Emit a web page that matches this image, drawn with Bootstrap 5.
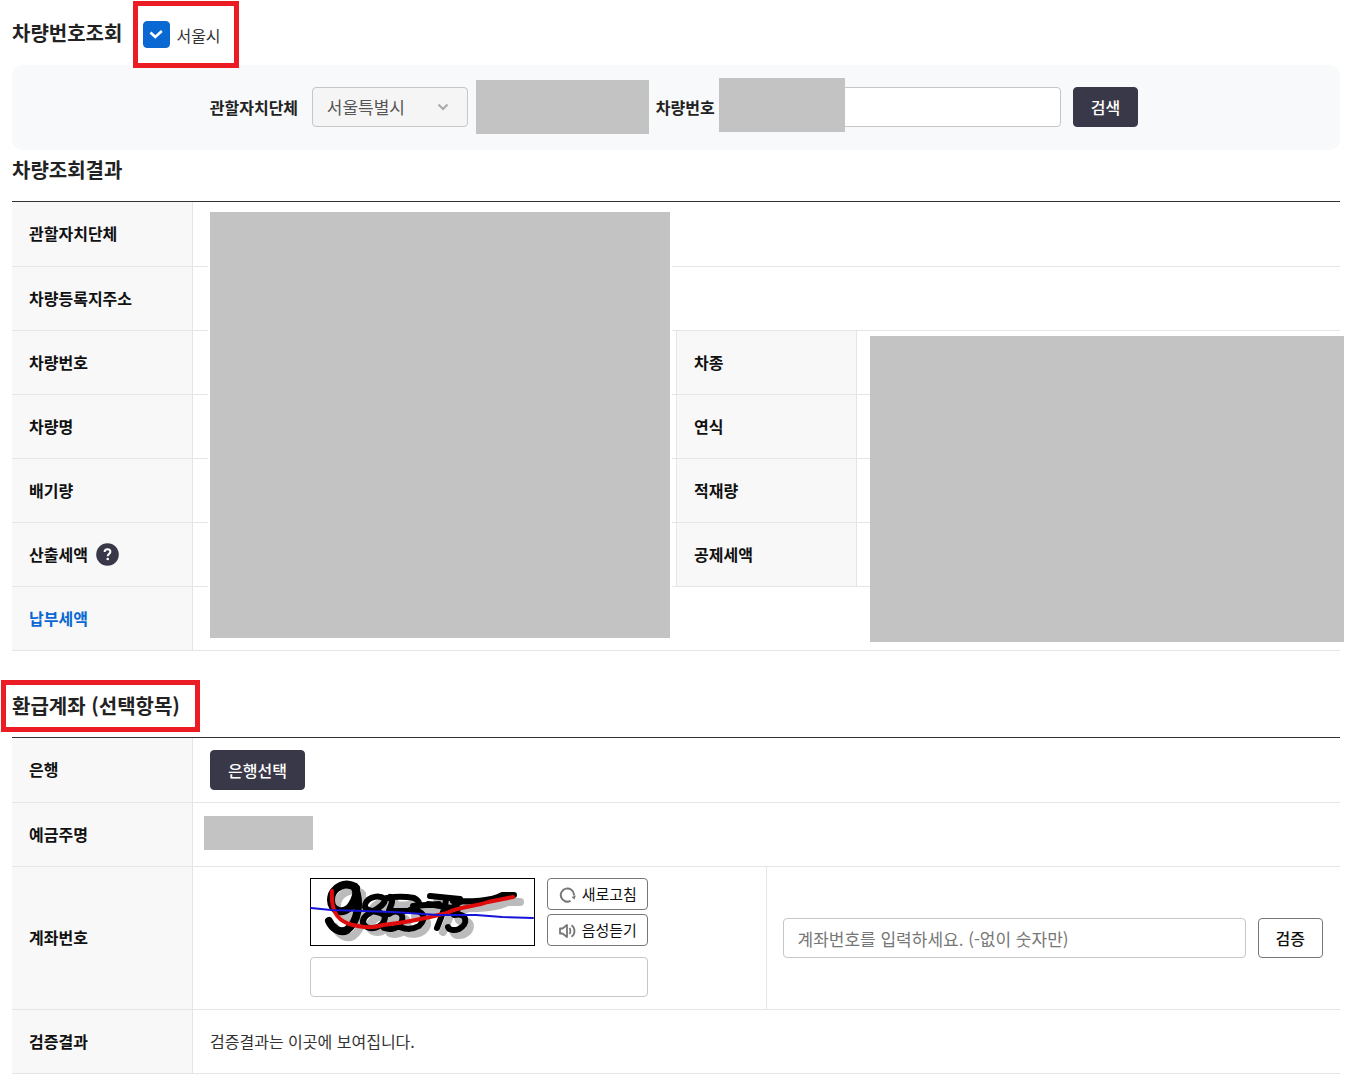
<!DOCTYPE html>
<html lang="ko">
<head>
<meta charset="utf-8">
<meta name="viewport" content="width=device-width, initial-scale=1">
<title>차량번호조회</title>
<link href="https://cdn.jsdelivr.net/npm/bootstrap@5.3.0/dist/css/bootstrap.min.css" rel="stylesheet">
<style>
body{font-family:"Noto Sans CJK KR","Noto Sans",sans-serif;font-size:16px;line-height:24px;color:#333;background:#fff}
.page{padding:0 14px 11px 12px}
.sec-title{font-size:20px;line-height:30px;font-weight:700;color:#222;margin:0}
.result-title{margin:5px 0 16px}
.acct-title{margin:40px 0 16px}
.head{height:65px;gap:21px}
.head .form-check-input{width:27px;height:27px;border-radius:4px;margin:0;border-color:#0a68d2}
.head .form-check-input:checked{background-color:#0a68d2;background-size:27px 27px;background-image:url("data:image/svg+xml,%3Csvg xmlns='http://www.w3.org/2000/svg' viewBox='0 0 27 27'%3E%3Cpath d='M7.500 11.500l4.800 4.500 6.500-6' fill='none' stroke='%23fff' stroke-width='2.600'/%3E%3C/svg%3E")}
.city-check{gap:6px}
.marked{position:absolute;border:5px solid #ec1c24;pointer-events:none}
.mark-city{left:-10px;right:-18px;top:-20px;bottom:-20px}
.mark-acct{left:-11px;right:-20px;top:-11px;bottom:-11px}
.finder{background:#f8f9fb;border-radius:10px;padding:22px 4px 23px 0}
.finder label{font-weight:700;color:#222}
.town-label{min-width:90px}
.car-label{min-width:60px}
.fld{height:40px;border:1px solid #c6c6c6;border-radius:4px;padding:0 14px;font-size:17px;color:#555}
.fld::placeholder{color:#767676;opacity:1}
.city{width:156px;background-color:#f5f5f5;background-position:right 18px center;background-size:12px 12px;background-image:url("data:image/svg+xml,%3Csvg xmlns='http://www.w3.org/2000/svg' viewBox='0 0 12 12'%3E%3Cpath d='M1.500 3.500l4.500 4.500 4.500-4.500' fill='none' stroke='%23aaa' stroke-width='2'/%3E%3C/svg%3E")}
.veil{background:#c3c3c3}
.veil-town{width:173px;height:54px;margin:-7px 7px -7px 8px}
.veil-car{left:-9px;width:126px;top:-9px;height:54px}
.veil-left{left:198px;right:calc(50% + 6px);top:11px;bottom:13px;box-shadow:0 0 0 2px #fff}
.veil-right{left:calc(50% + 194px);right:-4px;top:135px;bottom:9px}
.veil-owner{width:109px;height:34px;margin:0 0 4px -6px}
.carno{width:333px}
.cta{height:40px;padding:0 17px;border-radius:4px;font-size:16px;line-height:24px;border:1px solid #393848;background:#393848;color:#fff;font-weight:500}
.cta:hover{background:#26252f;color:#fff}
.cta-line{background:#fff;color:#111;border-color:#777;flex:none}
.space-12{margin-left:12px}
.info{table-layout:fixed;margin:0;border-top:1px solid #333;border-collapse:separate;border-spacing:0;color:#333;--bs-table-bg:transparent}
.info th,.info td{height:64px;padding:0 17px 2px;border-width:0 0 1px;border-color:#e5e5e5;border-style:solid;vertical-align:middle}
.info tr:first-child th,.info tr:first-child td{height:65px}
.info th{background:#f8f8f8;font-weight:700;color:#111;border-right-width:1px}
.info th.mid{border-left-width:1px}
.info th.due{color:#0a68d2}
.info td.part{border-right-width:1px;padding:11px 17px 12px}
.info td.verify{padding:0 17px 0 16px}
.info td.pick{padding-bottom:0}
.col-th{width:181px}
.help{width:23px;height:23px;border:0;padding:0;background:none;line-height:0;margin:2px 0 0 8px}
.help svg{display:block}
.captcha-box{width:338px}
.captcha-row{gap:12px;margin-bottom:11px}
.captcha-pic{flex:1;min-width:0;height:68px}
.tools{gap:4px}
.tool{height:32px;width:101px;border:1px solid #777;border-radius:4px;background:#fff;color:#111;font-size:15px;line-height:22px;padding:0;gap:6px}
</style>
<script src="https://cdn.jsdelivr.net/npm/bootstrap@5.3.0/dist/js/bootstrap.bundle.min.js"></script>
</head>
<body>
<main class="page">
  <div class="head d-flex align-items-center">
    <h2 class="sec-title">차량번호조회</h2>
    <div class="city-check position-relative d-flex align-items-center mt-1">
      <input class="form-check-input" type="checkbox" id="seoul" checked>
      <label for="seoul">서울시</label>
      <span class="marked mark-city"></span>
    </div>
  </div>

  <form class="finder d-flex justify-content-center align-items-center">
    <label for="city" class="town-label">관할자치단체</label>
    <select id="city" class="form-select fld city space-12"><option>서울특별시</option></select>
    <div class="veil veil-town"></div>
    <label for="carno" class="car-label">차량번호</label>
    <div class="position-relative carno space-12">
      <input id="carno" type="text" class="form-control fld">
      <span class="veil veil-car position-absolute"></span>
    </div>
    <button type="button" class="btn cta space-12">검색</button>
  </form>

  <h2 class="sec-title result-title">차량조회결과</h2>
  <div class="position-relative">
    <table class="table info">
      <colgroup><col class="col-th"><col><col class="col-th"><col></colgroup>
      <tbody>
        <tr><th scope="row">관할자치단체</th><td colspan="3"></td></tr>
        <tr><th scope="row">차량등록지주소</th><td colspan="3"></td></tr>
        <tr><th scope="row">차량번호</th><td></td><th scope="row" class="mid">차종</th><td></td></tr>
        <tr><th scope="row">차량명</th><td></td><th scope="row" class="mid">연식</th><td></td></tr>
        <tr><th scope="row">배기량</th><td></td><th scope="row" class="mid">적재량</th><td></td></tr>
        <tr><th scope="row"><div class="d-flex align-items-center">산출세액<button type="button" class="help" aria-label="도움말"><svg width="23" height="23" viewBox="0 0 23 23"><circle cx="11.500" cy="11.500" r="11.300" fill="#393848"/><path d="M8.600 9.100c0-1.900 1.200-2.900 2.900-2.900s2.900 1 2.900 2.600c0 2-2.700 2.200-2.700 4.400" fill="none" stroke="#fff" stroke-width="2"/><circle cx="11.700" cy="16" r="1.300" fill="#fff"/></svg></button></div></th><td></td><th scope="row" class="mid">공제세액</th><td></td></tr>
        <tr><th scope="row" class="due">납부세액</th><td colspan="3"></td></tr>
      </tbody>
    </table>
    <div class="veil veil-left position-absolute"></div>
    <div class="veil veil-right position-absolute"></div>
  </div>

  <h2 class="sec-title acct-title"><span class="position-relative d-inline-block">환급계좌 (선택항목)<span class="marked mark-acct"></span></span></h2>
  <table class="table info">
    <colgroup><col class="col-th"><col><col></colgroup>
    <tbody>
      <tr><th scope="row">은행</th><td colspan="2" class="pick"><button type="button" class="btn cta">은행선택</button></td></tr>
      <tr><th scope="row">예금주명</th><td colspan="2" class="pick"><div class="veil veil-owner"></div></td></tr>
      <tr>
        <th scope="row"><label for="account">계좌번호</label></th>
        <td class="part">
          <div class="captcha-box mx-auto">
            <div class="captcha-row d-flex">
              <svg class="captcha-pic" viewBox="0 0 225 68" role="img" aria-label="자동입력 방지 이미지">
                <rect x=".5" y=".5" width="224" height="67" fill="#fff" stroke="#000"/>
                <g fill="none" stroke-linecap="round" stroke-linejoin="round">
                  <g stroke="#bbb" stroke-width="8" transform="translate(6 6)">
                    <path d="M46 10C37 2 21 9 21 22c0 12 13 15 20 6 5-7 7-13 4-19M45 10c6 15 3 34-8 42-7 4-15-2-18-9"/>
                    <path d="M75 20c-9-5-20 2-19 9 2 6 16 2 18 9-1 9-16 14-20 6-3-10 20-14 21-24zM80 20c5 5-3 12-1 16 8-6 16 0 11 8-4 6-11 7-16 5M79 21c10 2 15-2 24 1 8 4 6 9-4 11 12 0 16 6 8 14-6 4-15 4-20-1"/>
                    <path d="M103 27l26 1M121 18l28 3M136 22c-1 9-5 18-9 26M150 25c-6 3-10 9-6 12 12-2 13 9 4 13-5 2-9 1-10-1"/>
                    <path d="M145 24c17 1 37-1 47-6l12 0"/>
                  </g>
                  <g stroke="#000" stroke-width="8">
                    <path d="M46 10C37 2 21 9 21 22c0 12 13 15 20 6 5-7 7-13 4-19M45 10c6 15 3 34-8 42-7 4-15-2-18-9"/>
                    <path stroke-width="6" d="M75 21c-8-6-21 0-20 8 2 6 18 3 20 10-1 12-18 15-22 6-2-11 22-13 22-24zM80 19c6 5-3 12-1 17 8-6 17 0 12 9-4 6-11 7-17 5M77 20c10-2 17-2 27 0 8 4 6 10-4 12 13 0 18 7 9 16-7 4-16 4-22-1M79 33h22"/>
                    <path stroke-width="6" d="M103 28l26-2M120 18l30 3M136 22c-1 9-5 18-9 28M150 24c-6 3-11 9-6 13 13-3 15 9 5 14-5 2-10 1-11-2M118 26l30 5"/>
                    <path stroke-width="6" d="M143 23c17 1 39 0 49-6l12 0"/>
                  </g>
                  <path d="M22 13c-1 17 3 28 17 33 12 3 22 5 34 1 20-2 44-7 64-12 12-7 28-6 41-11l25-5" stroke="#e00b0b" stroke-width="4"/>
                  <path d="M1 30l20 2 62 2 45 3 38 0 26 2 31 1" stroke="#1414d8" stroke-width="2"/>
                </g>
              </svg>
              <div class="tools d-flex flex-column">
                <button type="button" class="tool d-flex align-items-center justify-content-center"><svg width="17" height="17" viewBox="0 0 17 17" fill="none" stroke="#777" stroke-width="2"><path d="M11.500 14.900A6.600 6.600 0 1 1 15 8.500v1"/><path d="M12.500 11l4.300-1.500-1.300 4z" fill="#777" stroke="none"/></svg>새로고침</button>
                <button type="button" class="tool d-flex align-items-center justify-content-center"><svg width="17" height="17" viewBox="0 0 17 17" fill="none" stroke="#777" stroke-width="1.800" stroke-linejoin="round"><path d="M1 6.500h2.500L8 3v12l-4.500-3.500H1z"/><path d="M10.500 6c1.200 1.500 1.200 4.500 0 6M12.500 3.200c4 2.500 4 9.100 0 11.600"/></svg>음성듣기</button>
              </div>
            </div>
            <input type="text" class="form-control fld" aria-label="자동입력 방지 문자">
          </div>
        </td>
        <td class="verify">
          <div class="d-flex">
            <input id="account" type="text" class="form-control fld" placeholder="계좌번호를 입력하세요. (-없이 숫자만)">
            <button type="button" class="btn cta cta-line space-12">검증</button>
          </div>
        </td>
      </tr>
      <tr><th scope="row">검증결과</th><td colspan="2">검증결과는 이곳에 보여집니다.</td></tr>
    </tbody>
  </table>
</main>
</body>
</html>
